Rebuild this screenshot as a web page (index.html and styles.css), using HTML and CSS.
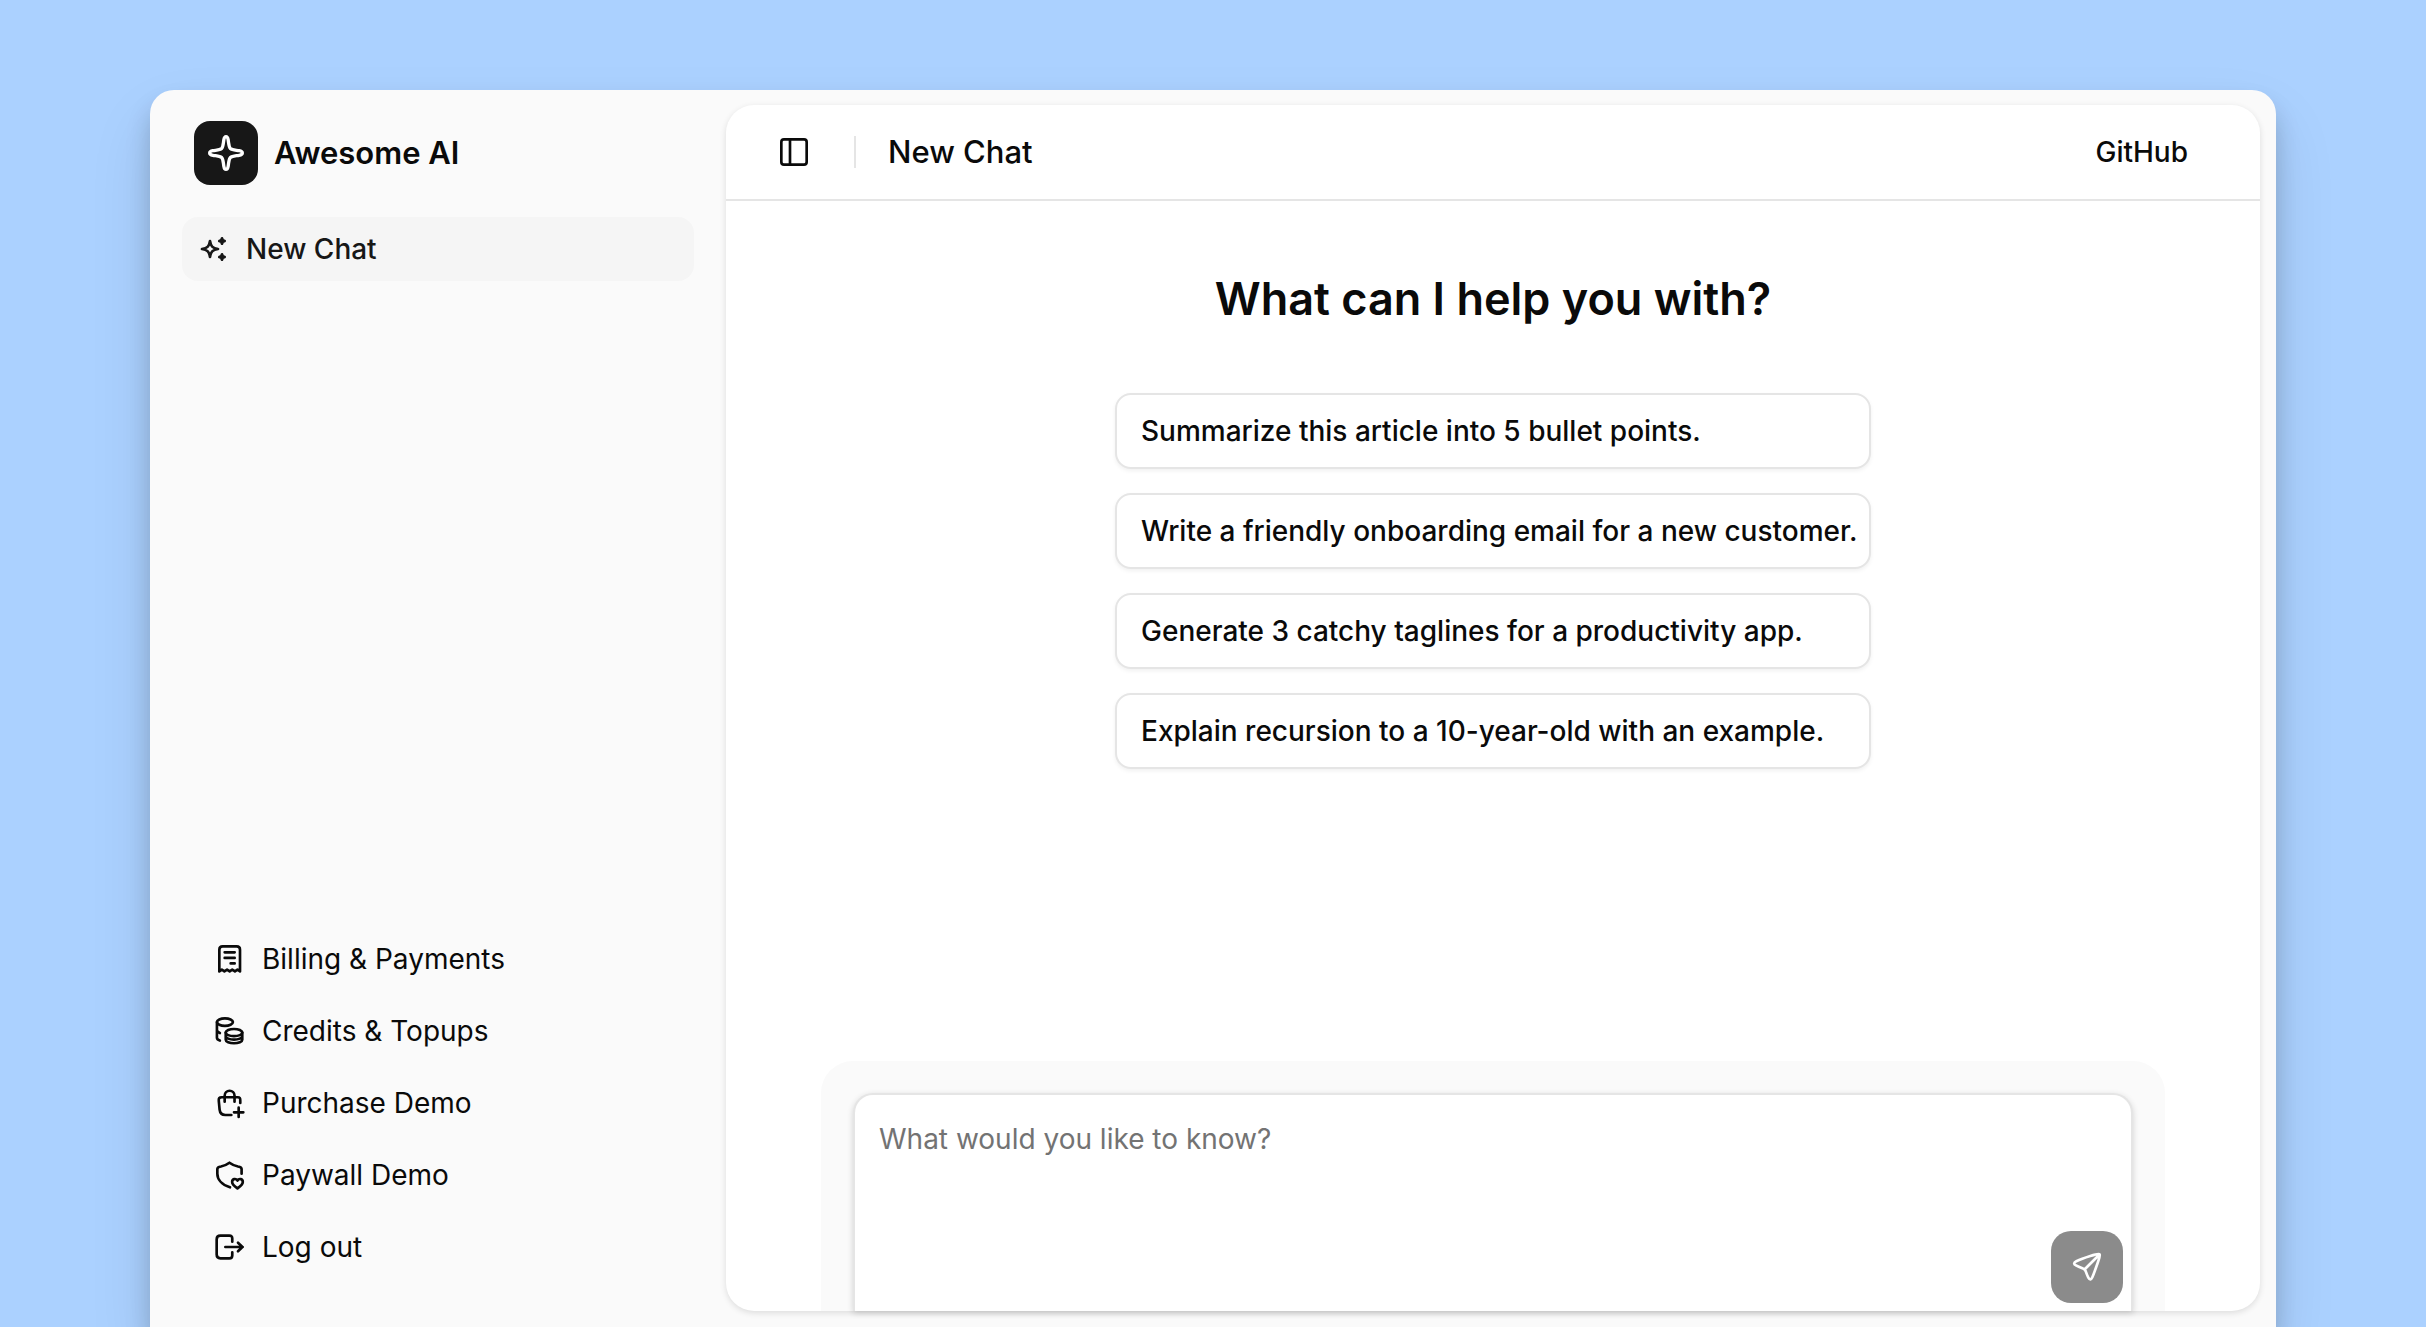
FILE: index.html
```html
<!DOCTYPE html>
<html lang="en">
<head>
<meta charset="utf-8">
<meta name="viewport" content="width=device-width, initial-scale=1">
<title>Awesome AI</title>
<link rel="stylesheet" href="styles.css">
</head>
<body>
<div class="window">
  <aside class="sidebar">
    <div class="brand">
      <span class="brand-logo">
        <svg class="icon icon-logo" viewBox="0 0 24 24" aria-hidden="true"><path d="M12 2.200c-.8 0-1.100.7-1.300 1.900-.4 2.600-.4 4.200-1.300 5.200-1 .9-2.700.9-5.300 1.300-1.200.2-1.900.6-1.900 1.400s.7 1.200 1.900 1.400c2.600.4 4.300.4 5.300 1.300.9 1 .9 2.600 1.300 5.200.2 1.200.5 1.900 1.300 1.900s1.100-.7 1.300-1.900c.4-2.600.4-4.200 1.300-5.200 1-.9 2.700-.9 5.300-1.300 1.200-.2 1.900-.6 1.900-1.400s-.7-1.200-1.900-1.400c-2.600-.4-4.300-.4-5.300-1.300-.9-1-.9-2.600-1.300-5.200-.2-1.200-.5-1.900-1.300-1.900Z"/></svg>
      </span>
      <span class="brand-name">Awesome AI</span>
    </div>
    <nav class="nav nav-main" aria-label="Chats">
      <a class="nav-link is-active" href="#">
        <svg class="icon" viewBox="0 0 24 24" aria-hidden="true"><path d="M9 6c.6 3.800 1.800 5.300 6 6-4.200.7-5.400 2.200-6 6-.6-3.800-1.800-5.300-6-6 4.200-.7 5.400-2.200 6-6Z"/><path fill="currentColor" d="M18 4l.6 1.400L20 6l-1.400.6L18 8l-.6-1.400L16 6l1.400-.6ZM18 16l.6 1.400L20 18l-1.400.6L18 20l-.6-1.400L16 18l1.400-.6Z"/></svg>
        New Chat
      </a>
    </nav>
    <nav class="nav nav-secondary" aria-label="Account">
      <a class="nav-link" href="#">
        <svg class="icon" viewBox="0 0 24 24" aria-hidden="true"><path d="M4 21.300V5c0-1.900.6-2.500 2.500-2.500h10.500c1.900 0 2.500.6 2.500 2.500v16.300l-1.900-1.300-1.900 1.300-2-1.300-1.950 1.300-1.950-1.300-2 1.300-1.900-1.300Z"/><path d="M8 7h7.500M8 11.200h7.500M12.500 15.300h3"/></svg>
        Billing &amp; Payments
      </a>
      <a class="nav-link" href="#">
        <svg class="icon" viewBox="0 0 24 24" aria-hidden="true"><ellipse cx="8.200" cy="5.300" rx="6" ry="2.800"/><path d="M2.200 5.500V17c0 .9.900 1.700 2.200 2.200M2.200 11.300c0 .9.900 1.700 2.200 2.200"/><ellipse cx="15" cy="13.200" rx="6.200" ry="2.700"/><path d="M8.800 13.200v5.300c0 1.500 2.800 2.700 6.200 2.700s6.200-1.200 6.200-2.700v-5.300M21.200 15.800c0 1.500-2.800 2.700-6.200 2.700s-6.200-1.200-6.200-2.700"/></svg>
        Credits &amp; Topups
      </a>
      <a class="nav-link" href="#">
        <svg class="icon" viewBox="0 0 24 24" aria-hidden="true"><path d="M8 11V6.500a3.700 3.700 0 0 1 7.400 0V11"/><path d="M13 21H8.500c-2.800 0-4-1-4.300-4L3.600 10.500c-.2-2 .3-2.800 2.200-2.800h12c1.500 0 2 .8 1.900 2.500V12M18.500 15.500v7M15 19h7"/></svg>
        Purchase Demo
      </a>
      <a class="nav-link" href="#">
        <svg class="icon" viewBox="0 0 24 24" aria-hidden="true"><path d="M12 21.200C5.500 19.200 2.500 15 2.500 11V7.500c0-1.300.7-1.600 2.700-1.900C8.500 5 10 4 11.600 2.800 13.500 4.200 15 5 18 5.600c2 .3 2.700.6 2.700 1.900V11"/><path d="M17.600 22c-1.400-1-4-2.700-4-4.800 0-2.300 2.700-3 4-1 1.300-2 4-1.300 4 1 0 2.100-2.600 3.800-4 4.800Z"/></svg>
        Paywall Demo
      </a>
      <a class="nav-link" href="#">
        <svg class="icon" viewBox="0 0 24 24" aria-hidden="true"><path d="M13.700 8V5.700c0-1.500-.6-2.200-2.200-2.200H4.800c-1.900 0-2.800.8-2.800 2.800v11.400c0 2 .9 2.800 2.800 2.800h6.700c1.600 0 2.200-.7 2.200-2.200V16"/><path d="M8.500 12h13M18 8.800l3.300 3.200-3.300 3.200"/></svg>
        Log out
      </a>
    </nav>
  </aside>

  <main class="panel">
    <header class="panel-header">
      <button class="toggle" type="button" aria-label="Toggle sidebar">
        <svg class="icon" viewBox="0 0 24 24" aria-hidden="true"><rect x="2.500" y="2.500" width="19" height="19" rx="2"/><path d="M9 2.500v19"/></svg>
      </button>
      <span class="divider"></span>
      <h1 class="title">New Chat</h1>
      <a class="github" href="#">GitHub</a>
    </header>
    <section class="welcome">
      <h2 class="question">What can I help you with?</h2>
      <div class="prompts">
        <button class="prompt" type="button">Summarize this article into 5 bullet points.</button>
        <button class="prompt" type="button">Write a friendly onboarding email for a new customer.</button>
        <button class="prompt" type="button">Generate 3 catchy taglines for a productivity app.</button>
        <button class="prompt" type="button">Explain recursion to a 10-year-old with an example.</button>
      </div>
    </section>
    <div class="composer">
      <form class="composer-box">
        <textarea class="composer-input" aria-label="Message" placeholder="What would you like to know?"></textarea>
        <button class="send" type="button" aria-label="Send message">
          <svg class="icon" viewBox="0 0 24 24" aria-hidden="true"><path d="M21.500 2.500c-.7-.7-4.500.5-7 1.300C10 5.200 6.500 6.500 4 7.700c-2 1-2.200 2.100-.3 3.100 1.500.8 3.500 1.600 5.300 2.300 1.100.4 1.500.8 2 2 .6 1.700 1.200 3.400 2 4.900 1 1.900 2.100 1.700 3-.3 1.200-2.700 2.500-6.500 3.900-10.500.8-2.400 2.300-6 1.600-6.700ZM10.500 13.500 21 3"/></svg>
        </button>
      </form>
    </div>
  </main>
</div>
</body>
</html>
```
FILE: styles.css
```css
*, *::before, *::after { box-sizing: border-box; }

body {
  margin: 0;
  height: 100vh;
  display: flex;
  overflow: hidden;
  padding: 90px 150px 0;
  background: #abd1ff;
  color: #0a0a0a;
  font: 400 28px/40px Inter, sans-serif;
}

button, textarea { font: inherit; color: inherit; }
a { color: inherit; text-decoration: none; }
h1, h2 { margin: 0; }

.icon {
  flex: none;
  width: 32px;
  height: 32px;
  fill: none;
  stroke: currentColor;
  stroke-width: 2;
  stroke-linecap: round;
  stroke-linejoin: round;
}
.icon-logo { width: 40px; height: 40px; }

.window {
  flex: 1;
  display: flex;
  background: #fafafa;
  border-radius: 24px 24px 0 0;
  box-shadow: 0 32px 64px rgba(0, 0, 0, 0.1), 0 16px 24px rgba(0, 0, 0, 0.18);
}

.sidebar {
  width: 576px;
  flex: none;
  display: flex;
  flex-direction: column;
  padding: 31px 32px 48px;
}

.brand {
  display: flex;
  align-items: center;
  gap: 16px;
  padding: 0 12px;
}
.brand-logo {
  display: grid;
  place-items: center;
  width: 64px;
  height: 64px;
  border-radius: 16px;
  background: #171717;
  color: #fff;
}
.brand-name { font-size: 31px; font-weight: 600; }

.nav { display: flex; flex-direction: column; }
.nav-main { margin-top: 32px; }
.nav-secondary { margin-top: auto; gap: 8px; padding: 0 16px; }
.nav-link {
  display: flex;
  align-items: center;
  gap: 16px;
  height: 64px;
  padding: 0 16px;
  border-radius: 16px;
}
.nav-link.is-active { background: #f5f5f5; color: #171717; font-weight: 500; }

.panel {
  flex: 1;
  min-width: 0;
  display: flex;
  flex-direction: column;
  margin: 15px 16px 16px 0;
  background: #fff;
  border-radius: 28px;
  box-shadow: 0 2px 6px rgba(0, 0, 0, 0.12);
}

.panel-header {
  display: flex;
  align-items: center;
  height: 96px;
  padding: 0 72px 0 40px;
  border-bottom: 2px solid #e5e5e5;
}
.toggle {
  display: grid;
  place-items: center;
  width: 56px;
  height: 56px;
  padding: 0;
  border: 0;
  background: none;
}
.divider { width: 2px; height: 32px; margin: 0 32px; background: #e5e5e5; }
.title { font-size: 31px; font-weight: 500; }
.github { margin-left: auto; font-weight: 500; }

.welcome {
  flex: 1;
  display: flex;
  flex-direction: column;
  align-items: center;
  gap: 62px;
  padding-top: 66px;
}
.question { font-size: 45px; line-height: 64px; font-weight: 600; }
.prompts {
  display: flex;
  flex-direction: column;
  gap: 24px;
  width: 756px;
  max-width: 100%;
}
.prompt {
  padding: 16px 8px 16px 24px;
  border: 2px solid #e5e5e5;
  border-radius: 16px;
  background: #fff;
  box-shadow: 0 2px 4px rgba(0, 0, 0, 0.06);
  font-weight: 500;
  text-align: left;
  white-space: nowrap;
}

.composer {
  align-self: center;
  width: calc(100% - 64px);
  max-width: 1344px;
  padding: 32px 32px 0;
  border-radius: 32px 32px 0 0;
  background: #fafafa;
}
.composer-box {
  display: flex;
  align-items: flex-end;
  height: 218px;
  padding: 0 8px 8px 0;
  border: 2px solid #e5e5e5;
  border-bottom: 0;
  border-radius: 20px 20px 0 0;
  background: #fff;
  box-shadow: 0 2px 6px rgba(0, 0, 0, 0.16);
}
.composer-input {
  flex: 1;
  align-self: stretch;
  padding: 24px;
  border: 0;
  outline: 0;
  resize: none;
  background: none;
}
.composer-input::placeholder { color: #737373; opacity: 1; }
.send {
  display: grid;
  place-items: center;
  width: 72px;
  height: 72px;
  padding: 0;
  border: 0;
  border-radius: 20px;
  background: #8b8b8b;
  color: #fff;
}
```
